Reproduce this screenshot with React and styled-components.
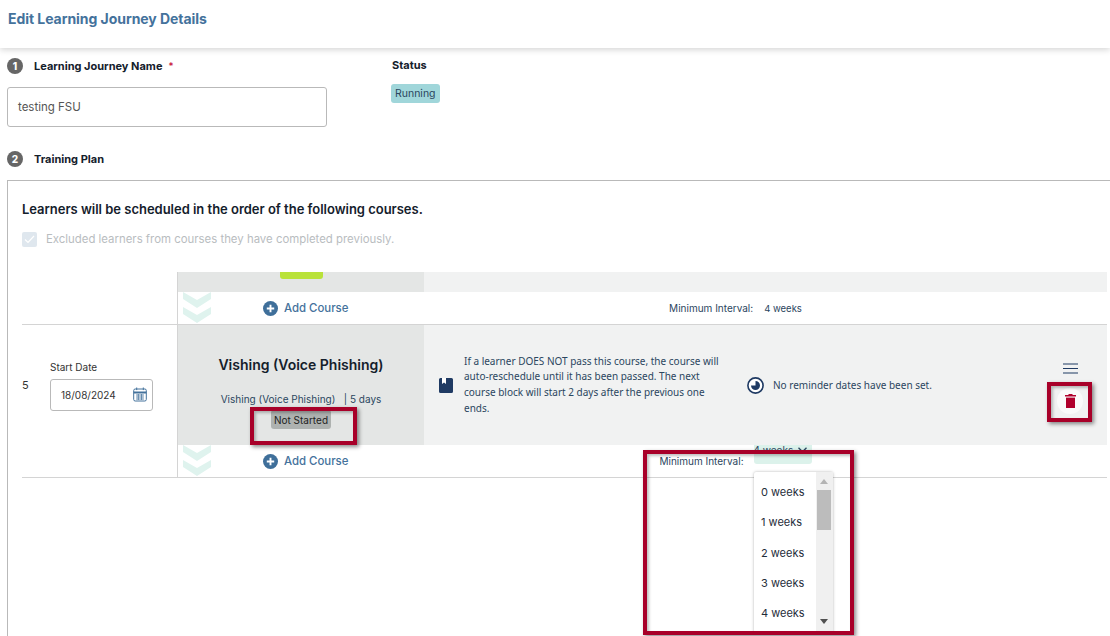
import React from "react";
import styled, { createGlobalStyle } from "styled-components";

const Global = createGlobalStyle`
  html, body { margin: 0; padding: 0; background: #fff; }
  body { width: 1110px; height: 636px; overflow: hidden; font-family: Inter, "Open Sans", sans-serif; color: #14202b; }
  * { box-sizing: border-box; }
`;

const Page = styled.div`position: relative; width: 1110px; height: 636px; overflow: hidden;`;
const Header = styled.header`
  height: 48px; padding: 10px 8px 0; background: #fff;
  box-shadow: 0 2px 6px rgba(0,0,0,.16); position: relative;
`;
const Title = styled.h1`margin: 0; font-size: 14px; line-height: 17px; font-weight: 700; color: #44729c; letter-spacing: -.05px;`;
const TopForm = styled.section`display: flex; padding: 10px 0 0 7px; height: 103px;`;
const NameCol = styled.div`width: 385px;`;
const StepHead = styled.div`display: flex; align-items: center; height: 16px;`;
const StepNum = styled.span`
  width: 16px; height: 16px; border-radius: 50%; background: #666; color: #fff;
  font-size: 10px; font-weight: 800; display: flex; align-items: center; justify-content: center;
`;
const StepLabel = styled.span`margin-left: 11px; font-size: 11px; font-weight: 700; color: #14202b;`;
const Req = styled.span`color: #c4002f; font-size: 10px; margin-left: 6px;`;
const NameInput = styled.div`
  width: 320px; height: 40px; margin-top: 13px; border: 1px solid #b9b9b9; border-radius: 3px;
  padding: 0 10px; display: flex; align-items: center; font-size: 11.5px; color: #555;
`;
const StatusCol = styled.div`padding-top: 1px;`;
const StatusLabel = styled.div`font-size: 11px; font-weight: 700; line-height: 13px; margin-left: 0;`;
const RunningBadge = styled.span`
  display: inline-flex; align-items: center; height: 19px; margin-top: 12px; margin-left: -1px; padding: 0 4px;
  background: #a0d6da; border-radius: 3px; font-size: 10.5px; color: #2b4660;
`;
const PlanHead = styled.div`padding-left: 7px; margin-top: 0;`;
const Panel = styled.section`
  margin: 13px 0 0 7px; width: 1120px; height: 480px; border: 1px solid #b9b9b9;
  padding: 20px 0 0 14px;
`;
const PlanTitle = styled.h2`margin: 0; font-size: 13px; line-height: 17px; font-weight: 600; color: #14202b; letter-spacing: -.02px;`;
const ExcludeRow = styled.div`display: flex; align-items: center; margin-top: 13px; height: 16px;`;
const Check = styled.span`
  width: 15px; height: 15px; background: #dfe7ee; border-radius: 2px; display: flex; align-items: center; justify-content: center;
`;
const ExcludeText = styled.span`margin-left: 9px; font-size: 11.4px; color: #b9bdbf;`;
const Table = styled.div`margin-top: 25px; width: 1085px;`;
const Row = styled.div`
  display: grid; grid-template-columns: 156px 246px 1fr;
  border-bottom: ${p => p.$line ? "1px solid #d4d4d4" : "0"};
`;
const SideCell = styled.div`
  border-right: 1px solid #d4d4d4; display: flex; align-items: center;
`;
const RowNum = styled.span`width: 28px; font-size: 11px; color: #333;`;
const DateBlock = styled.div`display: flex; flex-direction: column; margin-top: 1px;`;
const DateLabel = styled.label`font-size: 10px; line-height: 12px; color: #333;`;
const DateInput = styled.div`
  width: 103px; height: 32px; margin-top: 6px; border: 1px solid #b9b9b9; border-radius: 3px;
  padding: 0 5px 0 10px; display: flex; align-items: center; justify-content: space-between; font-size: 10px; color: #333; background: #fff;
`;
const CourseCell = styled.div`
  background: #e4e6e5; height: ${p => p.$h}px; display: flex; flex-direction: column; align-items: center;
`;
const GreenTab = styled.div`width: 43px; height: 7px; margin-left: 1px; background: #b9e23a; border-radius: 0 0 3px 3px;`;
const CourseName = styled.h3`margin: 31px 0 0; font-size: 14px; line-height: 17px; font-weight: 600; color: #14202b;`;
const CourseMeta = styled.div`margin-top: 20px; font-size: 10px; line-height: 12px; color: #2b4660; white-space: pre;`;
const NotStarted = styled.span`
  margin-top: 5px; height: 19px; padding: 0 3px; display: inline-flex; align-items: center;
  background: #aeb2b0; border-radius: 3px; font-size: 10px; color: #222;
`;
const InfoCell = styled.div`
  background: #f1f2f2; position: relative; padding-left: 15px; display: flex; align-items: center;
  height: ${p => p.$h}px;
`;
const BookWrap = styled.span`display: flex; width: 25px; flex: none;`;
const InfoText = styled.p`
  margin: 0; width: 258px; font-family: "Noto Sans", sans-serif; font-size: 10px; line-height: 15.6px; color: #2b4660;
`;
const ClockWrap = styled.span`display: flex; margin-left: 25px; width: 26px; flex: none;`;
const ReminderText = styled.span`font-family: "Noto Sans", sans-serif; font-size: 10px; color: #2b4660; margin-top: -1px;`;
const Actions = styled.div`
  position: absolute; right: 22px; top: 38px; width: 30px; display: flex; flex-direction: column; align-items: center;
`;
const TrashDot = styled.span`
  margin-top: 14px; width: 26px; height: 26px; border-radius: 50%; background: #fafafa;
  display: flex; align-items: center; justify-content: center;
`;
const ChevronCell = styled.div`
  position: relative; height: 32px; border-right: 0; display: flex; align-items: center; padding-left: 85px;
`;
const ChevronIcon = styled.svg`position: absolute; left: 5px; top: 0;`;
const AddBtn = styled.span`display: flex; align-items: center; gap: 6px; font-size: 11.4px; font-weight: 500; color: #44729c;`;
const IntervalCell = styled.div`
  height: 32px; display: flex; align-items: center; justify-content: center; padding-right: 60px; gap: ${p => p.$gap}px;
  font-size: 10px; color: #2b4660;
`;
const IntervalValue = styled.span`
  font-size: 9.5px; color: #2b4660;
`;
const IntervalSelect = styled.span`
  display: flex; align-items: center; gap: 5px; width: 58px; height: 19px; padding: 0 0 9px 0; margin-top: 0;
  background: #dcf2eb; border-radius: 0 0 3px 3px; font-size: 10px; color: #2b4660; align-self: flex-start;
`;
const Menu = styled.div`
  position: absolute; left: 754px; top: 472px; width: 79px; height: 160px; background: #fff;
  box-shadow: 0 0 3px rgba(0,0,0,.3); border-radius: 2px 2px 0 0; padding: 5px 0 0 7px;
`;
const MenuItem = styled.div`height: 30.3px; display: flex; align-items: center; font-size: 11px; color: #1f2d3a;`;
const ScrollTrack = styled.div`position: absolute; right: 0; top: 0; width: 17px; height: 100%; background: #f0f0f0;`;
const ScrollThumb = styled.div`position: absolute; left: 1px; right: 2px; top: 18px; height: 40px; background: #bcbcbc;`;
const ArrowUp = styled.div`
  position: absolute; left: 4px; top: 7px; width: 0; height: 0;
  border-left: 4px solid transparent; border-right: 4px solid transparent; border-bottom: 5px solid #b4b4b4;
`;
const ArrowDown = styled.div`
  position: absolute; left: 4px; top: 147px; width: 0; height: 0;
  border-left: 4px solid transparent; border-right: 4px solid transparent; border-top: 5px solid #505050;
`;
const RedBox = styled.div`
  position: absolute; left: ${p => p.$x}px; top: ${p => p.$y}px; width: ${p => p.$w}px; height: ${p => p.$h}px;
  border: 4px solid #a80029; box-shadow: 2px 2px 4px rgba(0,0,0,.45), inset 2px 2px 3px rgba(0,0,0,.25); pointer-events: none;
`;

const Plus = () => (
  <svg width="15" height="15" viewBox="0 0 15 15"><circle cx="7.5" cy="7.5" r="7.5" fill="#3f6f9a"/><path d="M7.5 3.8v7.4M3.8 7.5h7.4" stroke="#fff" strokeWidth="1.9"/></svg>
);
const Chevrons = () => (
  <ChevronIcon width="28" height="32" viewBox="0 0 28 32">
    <path d="M0 0l14 8 14-8v7L14 16 0 7zM0 15l14 8 14-8v7l-14 9-14-9z" fill="#dff3ee"/>
  </ChevronIcon>
);
const Calendar = () => (
  <svg width="14" height="15" viewBox="0 0 14 15" fill="none" stroke="#44729c">
    <rect x=".7" y="2" width="12.6" height="12" rx="1.5"/>
    <path d="M.7 5.5h12.6" strokeWidth="2"/>
    <path d="M3.7.5v2.6M10.3.5v2.6"/>
    <path d="M3 8h8M3 10h8M3 12h8M5.3 7v6M8.6 7v6" strokeWidth=".8"/>
  </svg>
);
const Book = () => (
  <svg width="14" height="15" viewBox="0 0 14 15">
    <path d="M1.5 0h11A1.5 1.5 0 0 1 14 1.5v12a1.5 1.5 0 0 1-1.5 1.5h-11A1.5 1.5 0 0 1 0 13.5v-12A1.5 1.5 0 0 1 1.5 0z" fill="#1f3a63"/>
    <path d="M3 0h4v6L5 4.5 3 6z" fill="#fff"/>
  </svg>
);
const Clock = () => (
  <svg width="17" height="17" viewBox="0 0 17 17">
    <circle cx="8.5" cy="8.5" r="7.6" fill="#fff" stroke="#1f3a63" strokeWidth="1.6"/>
    <path d="M8.5 4A4.5 4.5 0 1 1 4 8.5h4.5z" fill="#1f3a63"/>
  </svg>
);
const Burger = () => (
  <svg width="15" height="11" viewBox="0 0 15 11" stroke="#1f3a63" strokeWidth="1.1"><path d="M0 1h15M0 5.5h15M0 10h15"/></svg>
);
const Trash = () => (
  <svg width="11" height="14" viewBox="0 0 11 14"><path d="M3.5 0h4v1H11v1.6H0V1h3.5z" fill="#b0002c"/><path d="M1 3.6h9V14H1z" fill="#b0002c"/></svg>
);
const Chevron = () => (
  <svg width="9" height="6" viewBox="0 0 9 6" fill="none" stroke="#2b4660" strokeWidth="1.3"><path d="M.5.8l4 4 4-4"/></svg>
);
const Tick = () => (
  <svg width="11" height="9" viewBox="0 0 11 9" fill="none" stroke="#fff" strokeWidth="1.2"><path d="M1 4.5l3 3L10 1"/></svg>
);

export default function App() {
  return (
    <Page>
      <Global />
      <Header><Title>Edit Learning Journey Details</Title></Header>
      <TopForm>
        <NameCol>
          <StepHead><StepNum>1</StepNum><StepLabel>Learning Journey Name</StepLabel><Req>*</Req></StepHead>
          <NameInput>testing FSU</NameInput>
        </NameCol>
        <StatusCol>
          <StatusLabel>Status</StatusLabel>
          <RunningBadge>Running</RunningBadge>
        </StatusCol>
      </TopForm>
      <PlanHead><StepHead><StepNum>2</StepNum><StepLabel>Training Plan</StepLabel></StepHead></PlanHead>
      <Panel>
        <PlanTitle>Learners will be scheduled in the order of the following courses.</PlanTitle>
        <ExcludeRow><Check><Tick /></Check><ExcludeText>Excluded learners from courses they have completed previously.</ExcludeText></ExcludeRow>
        <Table>
          <Row>
            <SideCell />
            <CourseCell $h={20}><GreenTab /></CourseCell>
            <InfoCell $h={20} />
          </Row>
          <Row $line>
            <SideCell />
            <ChevronCell><Chevrons /><AddBtn><Plus />Add Course</AddBtn></ChevronCell>
            <IntervalCell $gap={11}>Minimum Interval:<IntervalValue>4 weeks</IntervalValue></IntervalCell>
          </Row>
          <Row>
            <SideCell>
              <RowNum>5</RowNum>
              <DateBlock>
                <DateLabel>Start Date</DateLabel>
                <DateInput>18/08/2024<Calendar /></DateInput>
              </DateBlock>
            </SideCell>
            <CourseCell $h={120}>
              <CourseName>Vishing (Voice Phishing)</CourseName>
              <CourseMeta>Vishing (Voice Phishing)   | 5 days</CourseMeta>
              <NotStarted>Not Started</NotStarted>
            </CourseCell>
            <InfoCell $h={120}>
              <BookWrap><Book /></BookWrap>
              <InfoText>If a learner DOES NOT pass this course, the course will auto-reschedule until it has been passed. The next course block will start 2 days after the previous one ends.</InfoText>
              <ClockWrap><Clock /></ClockWrap>
              <ReminderText>No reminder dates have been set.</ReminderText>
              <Actions><Burger /><TrashDot><Trash /></TrashDot></Actions>
            </InfoCell>
          </Row>
          <Row $line>
            <SideCell />
            <ChevronCell><Chevrons /><AddBtn><Plus />Add Course</AddBtn></ChevronCell>
            <IntervalCell $gap={10}>Minimum Interval:<IntervalSelect>4 weeks <Chevron /></IntervalSelect></IntervalCell>
          </Row>
        </Table>
      </Panel>
      <Menu>
        {[0,1,2,3,4].map(n => <MenuItem key={n}>{n} weeks</MenuItem>)}
        <ScrollTrack><ArrowUp /><ScrollThumb /><ArrowDown /></ScrollTrack>
      </Menu>
      <RedBox $x={250} $y={407} $w={107} $h={38} />
      <RedBox $x={1047} $y={382} $w={45} $h={40} />
      <RedBox $x={643} $y={450} $w={211} $h={185} />
    </Page>
  );
}
